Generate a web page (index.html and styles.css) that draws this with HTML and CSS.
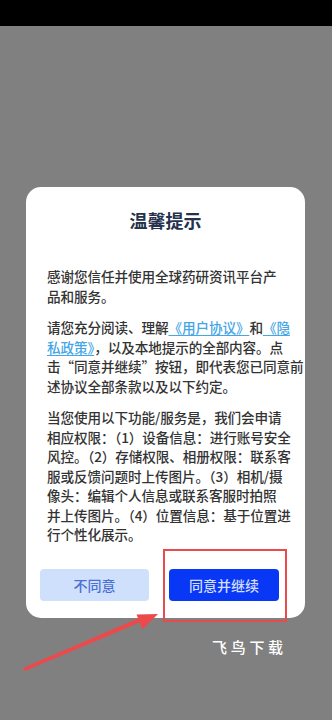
FILE: index.html
```html
<!DOCTYPE html>
<html lang="zh-CN">
<head>
<meta charset="utf-8">
<link rel="stylesheet" href="styles.css">
</head>
<body>
<div class="status"></div>
<div class="dialog">
  <h1 class="title">温馨提示</h1>
  <div class="content">
    <p>感谢您信任并使用全球药研资讯平台产<br>品和服务。</p>
    <p>请您充分阅读、理解<a class="link">《用户协议》</a>和<a class="link">《隐<br>私政策》</a>，以及本地提示的全部内容。点<br>击“同意并继续”按钮，即代表您已同意前<br>述协议全部条款以及以下约定。</p>
    <p>当您使用以下功能/服务是，我们会申请<br>相应权限：（1）设备信息：进行账号安全<br>风控。（2）存储权限、相册权限：联系客<br>服或反馈问题时上传图片。（3）相机/摄<br>像头：编辑个人信息或联系客服时拍照<br>并上传图片。（4）位置信息：基于位置进<br>行个性化展示。</p>
  </div>
  <div class="actions">
    <button class="btn btn-cancel">不同意</button>
    <button class="btn btn-ok">同意并继续</button>
  </div>
</div>
<div class="highlight"></div>
<svg class="arrow" width="332" height="720" viewBox="0 0 332 720">
  <polygon points="23,668 25,671 141,622 139,618" fill="#ea4a4c"/>
  <polygon points="158,614 136.5,614.5 142.5,629.5" fill="#ea4a4c"/>
</svg>
<div class="watermark">飞鸟下载</div>
</body>
</html>
```

FILE: styles.css
```css
html, body {
  margin: 0;
  padding: 0;
}
body {
  width: 332px;
  height: 720px;
  background: #808080;
  font-family: "Noto Sans CJK SC", "Noto Sans", sans-serif;
  position: relative;
  overflow: hidden;
}
.status {
  height: 26px;
  background: #000;
}
.dialog {
  margin: 161px 0 0 26px;
  width: 279px;
  box-sizing: border-box;
  height: 431px;
  background: #fff;
  border-radius: 15px;
  padding-top: 20px;
}
.title {
  margin: 0;
  font-size: 18px;
  line-height: 26px;
  font-weight: 700;
  color: #26324d;
  text-align: center;
}
.content {
  margin-top: 34px;
  padding: 0 20px 0 21px;
}
.content p {
  margin: 0 0 12px 0;
  font-size: 13.6px;
  line-height: 19.5px;
  color: #333333;
  white-space: nowrap;
  letter-spacing: -0.1px;
  font-weight: 500;
}
.content p:last-child {
  margin-bottom: 0;
}
.link {
  color: #45a6e6;
  text-decoration: underline;
  text-underline-offset: 2px;
}
.actions {
  display: flex;
  gap: 20px;
  padding: 0 26px 0 14px;
  margin-top: 24px;
}
.btn {
  height: 32px;
  border: none;
  border-radius: 4px;
  font-family: "Noto Sans CJK SC", "Noto Sans", sans-serif;
  font-size: 14px;
  font-weight: 500;
  padding: 0;
}
.btn-cancel {
  width: 109px;
  background: #cfe0fc;
  color: #4b6fd4;
}
.btn-ok {
  width: 110px;
  background: #0838f5;
  color: #d3defe;
}
.highlight {
  position: absolute;
  left: 163px;
  top: 549px;
  width: 120px;
  height: 69px;
  border: 2px solid #e94a4c;
}
.arrow {
  position: absolute;
  left: 0;
  top: 0;
}
.watermark {
  position: absolute;
  left: 212px;
  top: 636px;
  font-size: 15px;
  line-height: 22px;
  letter-spacing: 3.7px;
  color: #fff;
  font-weight: 500;
}
```
